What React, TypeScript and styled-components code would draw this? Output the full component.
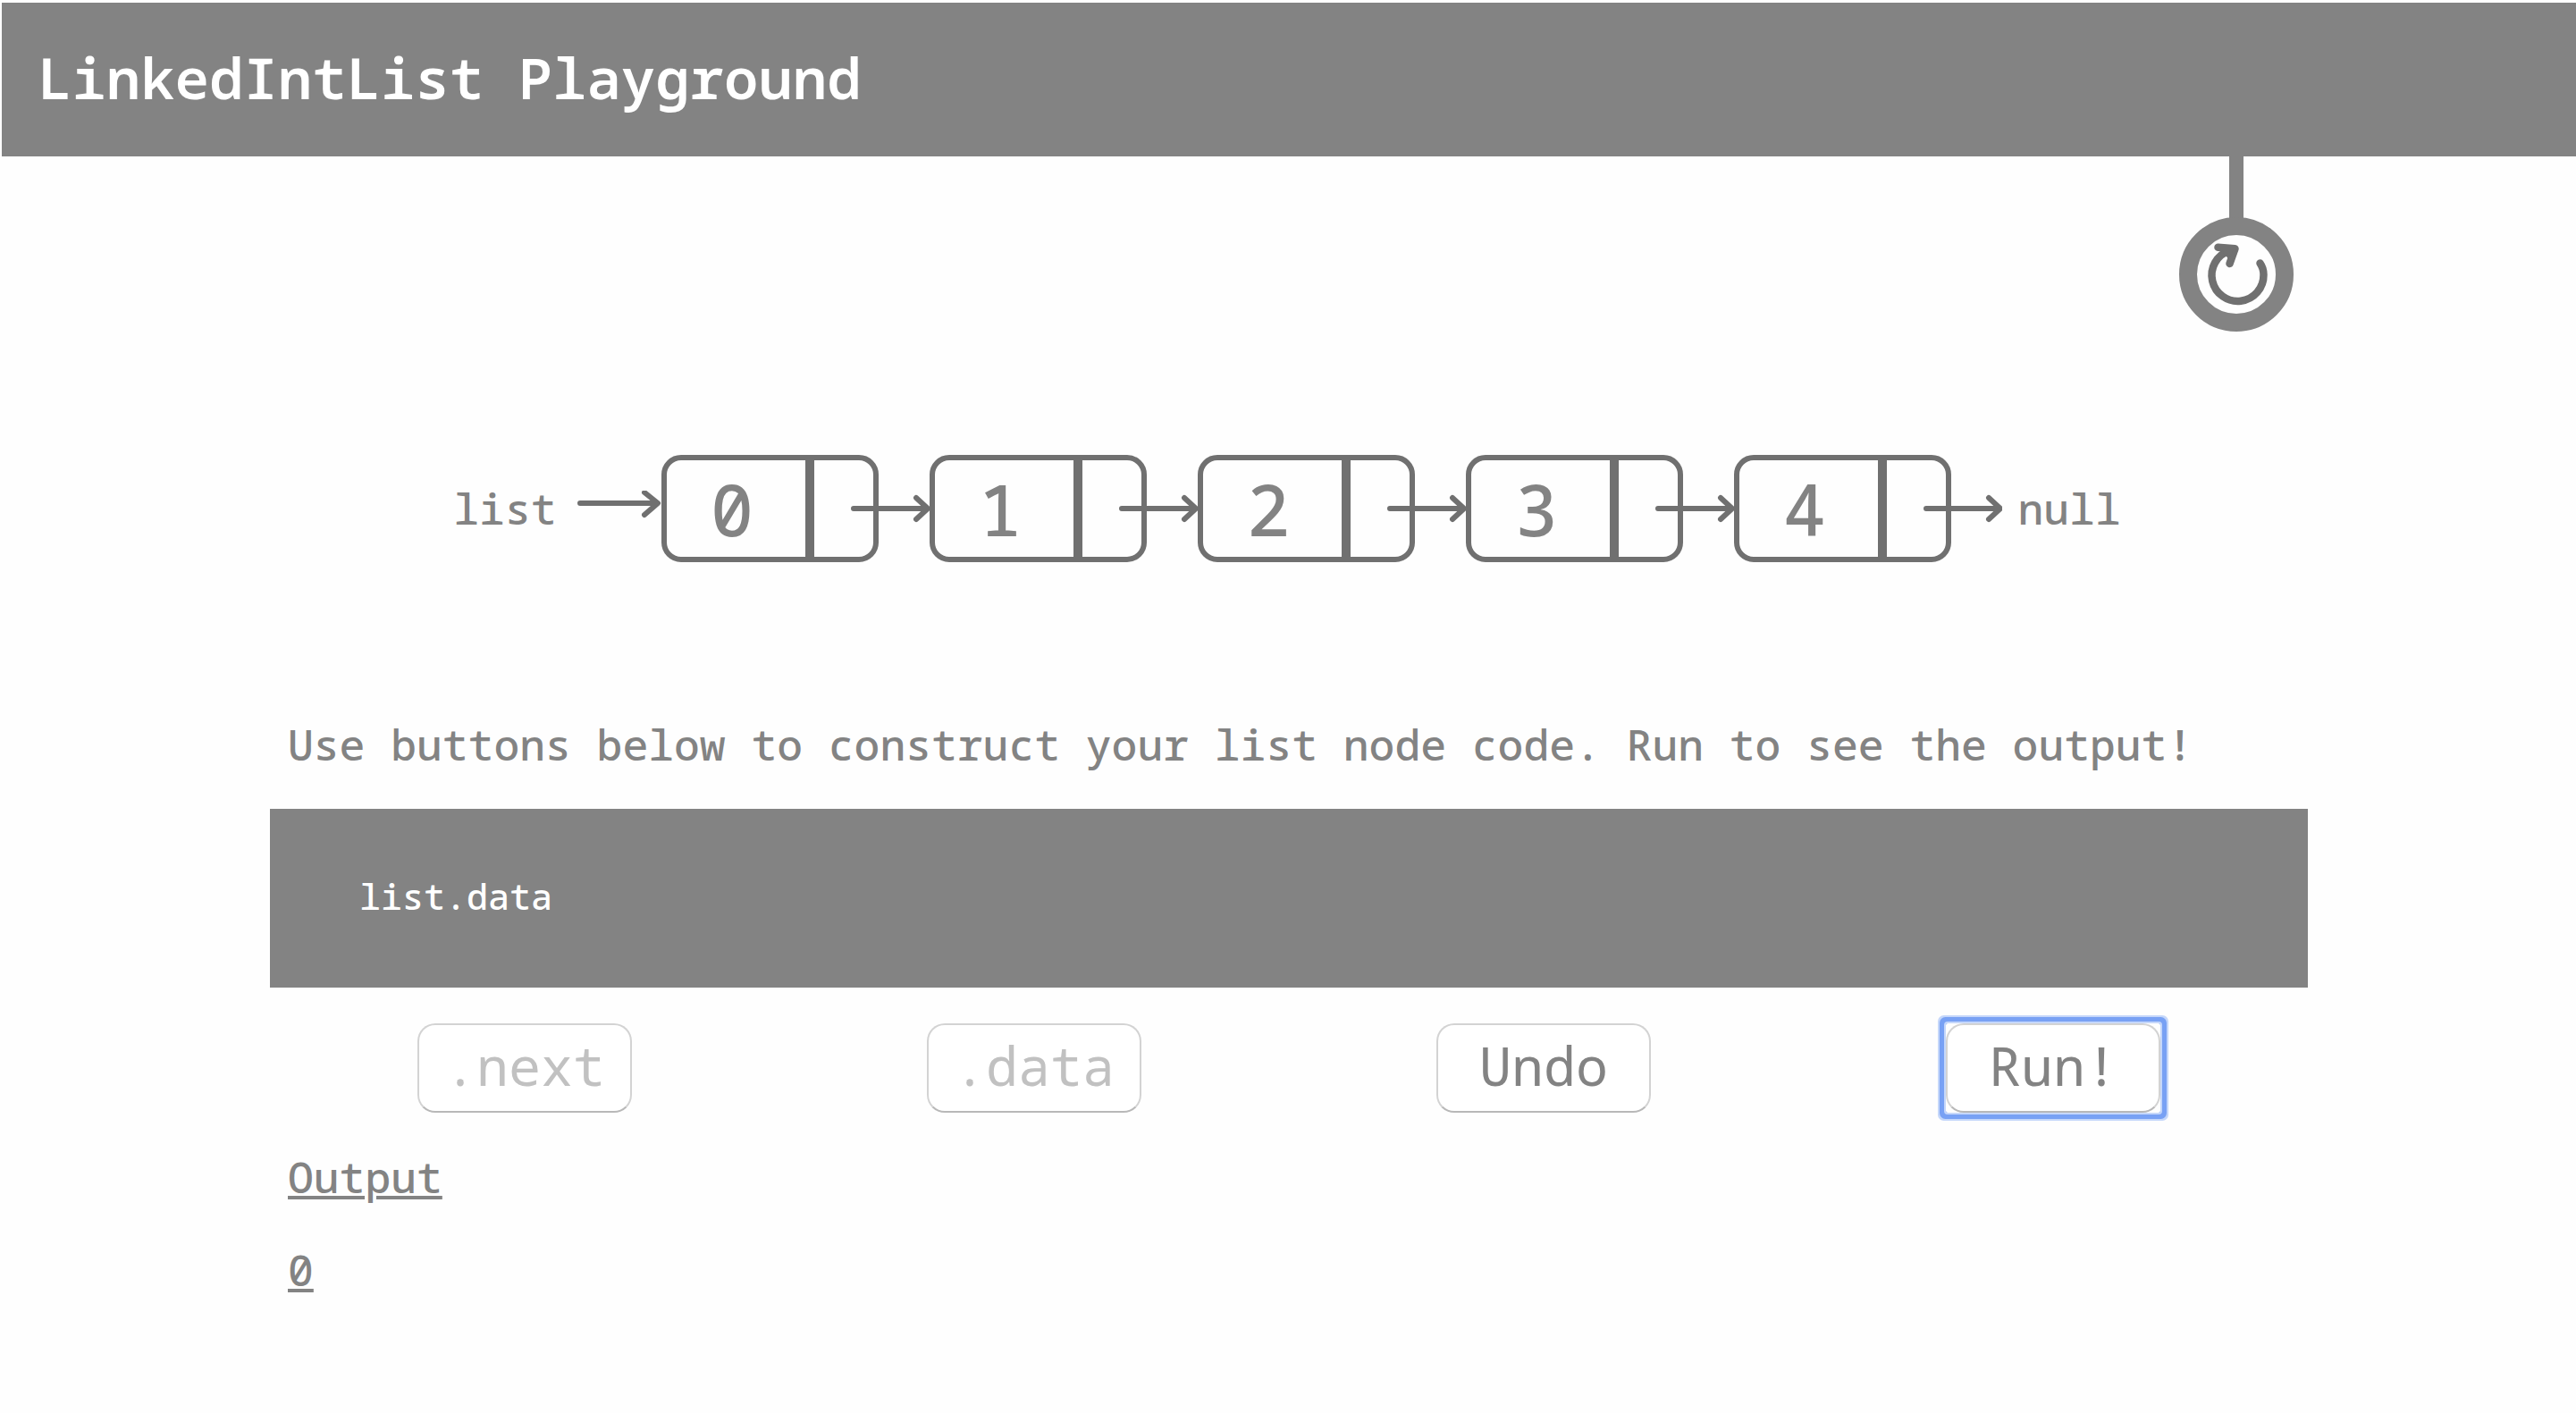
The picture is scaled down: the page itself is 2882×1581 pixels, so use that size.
import React, { useState } from "react";
import styled, { createGlobalStyle, css } from "styled-components";

const mono = `"Noto Sans Mono", "DejaVu Sans Mono", monospace`;
const grey = "#838383";
const ink = "#707070";

const GlobalStyle = createGlobalStyle`
  * { box-sizing: border-box; }
  body {
    margin: 0;
    padding: 3px 0 0 2px;
    background: #fefefe;
    color: ${grey};
    font-family: ${mono};
    font-weight: 500;
  }
  button { font: inherit; color: inherit; }
`;

const Header = styled.header`
  padding: 42px 40px 46px;
  background: ${grey};
  color: #fff;
`;

const Title = styled.h1`
  margin: 0;
  font-size: 64px;
  font-weight: 600;
  line-height: 84px;
`;

const Column = styled.main`
  max-width: 2280px;
  margin: 0 auto;
`;

const Hanger = styled.div`
  display: flex;
  flex-direction: column;
  align-items: center;
  width: 128px;
  margin: 0 16px 0 auto;
`;

const Cord = styled.div`
  width: 16px;
  height: 70px;
  margin-bottom: -2px;
  background: ${grey};
`;

const ResetButton = styled.button`
  width: 128px;
  height: 128px;
  padding: 0;
  border: 0;
  background: none;
  cursor: pointer;
`;

const Drawing = styled.svg`
  display: block;
  flex: none;
  fill: none;
  stroke: ${ink};
  stroke-linecap: round;
  stroke-linejoin: round;
`;

const ListRow = styled.div`
  display: flex;
  justify-content: center;
  align-items: center;
  margin-top: 138px;
  padding-right: 4px;
`;

const EndLabel = styled.span<{ $gap?: number }>`
  margin-left: ${(p) => p.$gap ?? 0}px;
  font-size: 48px;
  line-height: 64px;
`;

const Node = styled.div`
  position: relative;
  width: 300px;
`;

const NodeBox = styled.div`
  display: flex;
  width: 243px;
  height: 120px;
  border: 6px solid ${ink};
  border-radius: 22px;
`;

const NodeData = styled.div`
  flex: 1;
  padding-right: 8px;
  font-size: 80px;
  line-height: 108px;
  text-align: center;
`;

const NodeNext = styled.div`
  width: 76px;
  border-left: 10px solid ${ink};
`;

const NodeArrow = styled(Drawing)`
  position: absolute;
  right: 0;
  top: 40px;
`;

const Prompt = styled.p`
  margin: 172px 20px 40px;
  font-size: 48px;
  line-height: 64px;
`;

const Code = styled.pre`
  margin: 0;
  padding: 68px 100px 72px;
  background: ${grey};
  color: #fff;
  font-family: inherit;
  font-size: 40px;
  line-height: 60px;
`;

const Controls = styled.div`
  display: grid;
  grid-template-columns: repeat(4, 1fr);
  justify-items: center;
  margin-top: 40px;
`;

const ButtonFrame = styled.div<{ $focused?: boolean }>`
  ${(p) =>
    p.$focused &&
    css`
      border-radius: 2px;
      box-shadow: 0 0 0 2px #c5d7fa, 0 0 0 7px #78a1f4, 0 0 0 9px #c5d7fa;
    `}
`;

const Action = styled.button`
  display: block;
  width: 240px;
  height: 100px;
  padding: 0 0 6px;
  border: 2px solid #d3d3d3;
  border-bottom-color: #b8b8b8;
  border-radius: 20px;
  background: #fff;
  font-size: 60px;
  font-weight: 400;
  line-height: 80px;
  outline: none;
  cursor: pointer;
  &:disabled {
    color: #c1c1c1;
    cursor: default;
  }
`;

const Output = styled.section`
  display: flex;
  flex-direction: column;
  gap: 40px;
  margin: 40px 20px 0;
`;

const OutputLine = styled.p`
  margin: 0;
  font-size: 48px;
  line-height: 64px;
  text-decoration: underline;
  text-decoration-thickness: 4px;
  text-underline-offset: 3px;
`;

const values = [0, 1, 2, 3, 4];

function evaluate(steps: string[]): string {
  const hops = steps.filter((s) => s === ".next").length;
  const node = values[hops];
  return node === undefined ? "NullPointerException" : String(node);
}

export default function App() {
  const [steps, setSteps] = useState<string[]>([".data"]);
  const [output, setOutput] = useState("0");
  const done = steps.includes(".data");

  const reset = () => {
    setSteps([]);
    setOutput("");
  };

  return (
    <>
      <GlobalStyle />
      <Header>
        <Title>LinkedIntList Playground</Title>
      </Header>
      <Column>
        <Hanger>
          <Cord />
          <ResetButton aria-label="Reset" onClick={reset}>
            <Drawing width="128" height="128" viewBox="8 8 128 128" strokeWidth="8.5">
              <circle cx="72" cy="72" r="54" stroke={grey} strokeWidth="20" />
              <path d="M98.5 59.5 C101 63 102.5 68 102.5 72.5 A29 29 0 1 1 64 45.5" />
              <path d="M51.5 41.8 L70.5 43.2 L64.5 60" />
              <path d="M56 43 L71 43 L66 56 Z" fill={ink} strokeWidth="3" />
            </Drawing>
          </ResetButton>
        </Hanger>

        <ListRow>
          <EndLabel>list</EndLabel>
          <Drawing width="117" height="40" viewBox="0 0 117 40" strokeWidth="6">
            <path d="M26 14 H112 M98 2 L113 14 L98 27" />
          </Drawing>
          {values.map((v) => (
            <Node key={v}>
              <NodeBox>
                <NodeData>{v}</NodeData>
                <NodeNext />
              </NodeBox>
              <NodeArrow width="94" height="40" viewBox="0 0 94 40" strokeWidth="6">
                <path d="M9 20 H90 M79 8 L92 20 L79 32" />
              </NodeArrow>
            </Node>
          ))}
          <EndLabel $gap={18}>null</EndLabel>
        </ListRow>

        <Prompt>Use buttons below to construct your list node code. Run to see the output!</Prompt>
        <Code>{"list" + steps.join("")}</Code>

        <Controls>
          <ButtonFrame>
            <Action disabled={done} onClick={() => setSteps([...steps, ".next"])}>.next</Action>
          </ButtonFrame>
          <ButtonFrame>
            <Action disabled={done} onClick={() => setSteps([...steps, ".data"])}>.data</Action>
          </ButtonFrame>
          <ButtonFrame>
            <Action onClick={() => setSteps(steps.slice(0, -1))}>Undo</Action>
          </ButtonFrame>
          <ButtonFrame $focused>
            <Action onClick={() => setOutput(evaluate(steps))}>Run!</Action>
          </ButtonFrame>
        </Controls>

        <Output>
          <OutputLine>Output</OutputLine>
          <OutputLine>{output}</OutputLine>
        </Output>
      </Column>
    </>
  );
}
